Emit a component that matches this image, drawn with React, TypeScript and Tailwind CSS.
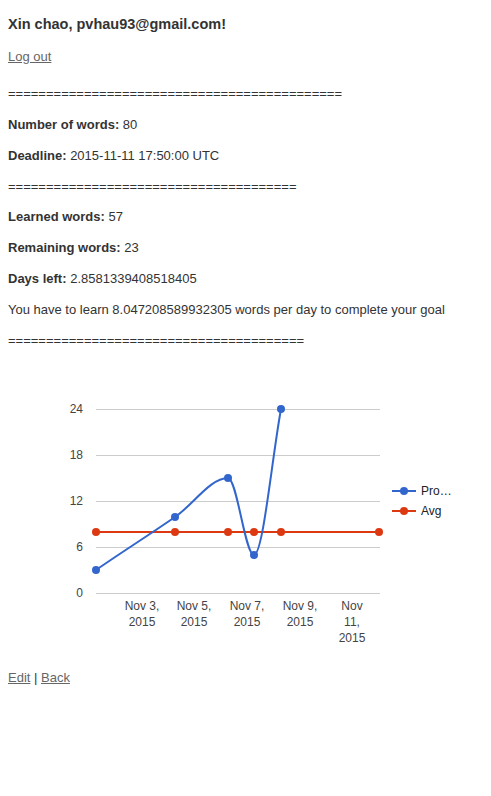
import React from 'react';

const Stat: React.FC<{ label: string; value: string; className?: string }> = ({ label, value, className = 'mt-[13px]' }) => (
    <p className={className}>
        <strong className="font-bold">{label}</strong> {value}
    </p>
);

const blue = [
    [96, 569],
    [175, 516],
    [228, 477],
    [254, 554],
    [281, 408],
];
const red = [96, 175, 228, 254, 281, 379];

const ProgressChart: React.FC = () => {
    const grid = [408, 454, 500, 546, 592];
    const ticks = ['24', '18', '12', '6', '0'];
    const curve =
        'M96 569 C122 551 149 534 175 516 C193 504 210 477 228 477 C237 477 245 554 254 554 C263 554 272 457 281 408';
    const dates = [
        { x: 142, lines: ['Nov 3,', '2015'] },
        { x: 194, lines: ['Nov 5,', '2015'] },
        { x: 247, lines: ['Nov 7,', '2015'] },
        { x: 300, lines: ['Nov 9,', '2015'] },
        { x: 352, lines: ['Nov', '11,', '2015'] },
    ];
    return (
        <svg className="block mt-[13px]" width={475} height={293} viewBox="8 362 475 293" fontFamily="'Liberation Sans', Arial, sans-serif">
            {grid.map((y, i) => (
                <g key={y}>
                    <line x1={96} x2={380} y1={y + 0.5} y2={y + 0.5} stroke="#cccccc" strokeWidth={1} />
                    <text x={83} y={y + 4} textAnchor="end" fontSize={12} fill="#444">
                        {ticks[i]}
                    </text>
                </g>
            ))}
            <line x1={96} x2={379} y1={531} y2={531} stroke="#dc3912" strokeWidth={2} />
            <path d={curve} fill="none" stroke="#3366cc" strokeWidth={2} />
            {red.map((x) => (
                <circle key={x} cx={x} cy={531} r={4} fill="#dc3912" />
            ))}
            {blue.map(([x, y]) => (
                <circle key={x} cx={x} cy={y} r={4} fill="#3366cc" />
            ))}
            {dates.map((d) => (
                <text key={d.x} x={d.x} textAnchor="middle" fontSize={12} fill="#444">
                    {d.lines.map((l, i) => (
                        <tspan key={i} x={d.x} y={609 + i * 16}>
                            {l}
                        </tspan>
                    ))}
                </text>
            ))}
            <line x1={392} x2={416} y1={490} y2={490} stroke="#3366cc" strokeWidth={2} />
            <circle cx={404} cy={490} r={4} fill="#3366cc" />
            <text x={421} y={494} fontSize={12} fill="#222">Pro…</text>
            <line x1={392} x2={416} y1={510} y2={510} stroke="#dc3912" strokeWidth={2} />
            <circle cx={404} cy={510} r={4} fill="#dc3912" />
            <text x={421} y={514} fontSize={12} fill="#222">Avg</text>
        </svg>
    );
};

export default function App() {
    return (
        <div className="min-h-[796px] bg-white px-2 pt-[15px] font-['Liberation_Sans',Arial,sans-serif] text-[13px] leading-[18px] text-[#333]">
            <h3 className="text-[14.5px] leading-[18px] font-bold">Xin chao, pvhau93@gmail.com!</h3>
            <p className="mt-[15px]">
                <a href="#" className="text-[#666] underline">Log out</a>
            </p>
            <p className="mt-[19px]">============================================</p>
            <Stat label="Number of words:" value="80" />
            <Stat label="Deadline:" value="2015-11-11 17:50:00 UTC" />
            <p className="mt-[13px]">======================================</p>
            <Stat label="Learned words:" value="57" className="mt-[12px]" />
            <Stat label="Remaining words:" value="23" />
            <Stat label="Days left:" value="2.8581339408518405" />
            <p className="mt-[13px]">You have to learn 8.047208589932305 words per day to complete your goal</p>
            <p className="mt-[13px]">=======================================</p>
            <ProgressChart />
            <p className="mt-[13px]">
                <a href="#" className="text-[#666] underline">Edit</a> |{' '}
                <a href="#" className="text-[#666] underline">Back</a>
            </p>
        </div>
    );
}
